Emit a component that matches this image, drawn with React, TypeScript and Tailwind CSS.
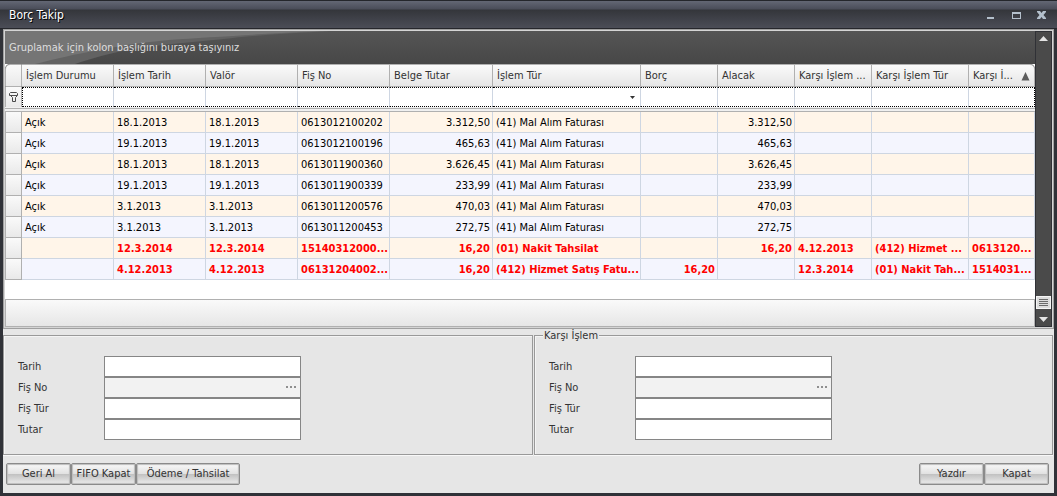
import React, { useState } from "react";
import clsx from "clsx";

type Align = "left" | "right";

interface Column {
  id: string;
  title: string;
  width: string;
  align?: Align;
  filter?: "text" | "select";
  sorted?: boolean;
}

interface Row {
  linked?: boolean;
  cells: string[];
}

const columns: Column[] = [
  { id: "durum", title: "İşlem Durumu", width: "w-[92px]" },
  { id: "tarih", title: "İşlem Tarih", width: "w-[92px]" },
  { id: "valor", title: "Valör", width: "w-[92px]" },
  { id: "fis", title: "Fiş No", width: "w-[92px]" },
  { id: "belge", title: "Belge Tutar", width: "w-[103px]", align: "right" },
  { id: "tur", title: "İşlem Tür", width: "w-[148px]", filter: "select" },
  { id: "borc", title: "Borç", width: "w-[77px]", align: "right" },
  { id: "alacak", title: "Alacak", width: "w-[77px]", align: "right" },
  { id: "karsiTarih", title: "Karşı İşlem ...", width: "w-[77px]" },
  { id: "karsiTur", title: "Karşı İşlem Tür", width: "w-[97px]" },
  { id: "karsiFis", title: "Karşı İ...", width: "w-[66px]", sorted: true }
];

const rows: Row[] = [
  { cells: ["Açık", "18.1.2013", "18.1.2013", "0613012100202", "3.312,50", "(41) Mal Alım Faturası", "", "3.312,50", "", "", ""] },
  { cells: ["Açık", "19.1.2013", "19.1.2013", "0613012100196", "465,63", "(41) Mal Alım Faturası", "", "465,63", "", "", ""] },
  { cells: ["Açık", "18.1.2013", "18.1.2013", "0613011900360", "3.626,45", "(41) Mal Alım Faturası", "", "3.626,45", "", "", ""] },
  { cells: ["Açık", "19.1.2013", "19.1.2013", "0613011900339", "233,99", "(41) Mal Alım Faturası", "", "233,99", "", "", ""] },
  { cells: ["Açık", "3.1.2013", "3.1.2013", "0613011200576", "470,03", "(41) Mal Alım Faturası", "", "470,03", "", "", ""] },
  { cells: ["Açık", "3.1.2013", "3.1.2013", "0613011200453", "272,75", "(41) Mal Alım Faturası", "", "272,75", "", "", ""] },
  { linked: true, cells: ["", "12.3.2014", "12.3.2014", "15140312000...", "16,20", "(01) Nakit Tahsilat", "", "16,20", "4.12.2013", "(412) Hizmet ...", "0613120..."] },
  { linked: true, cells: ["", "4.12.2013", "4.12.2013", "06131204002...", "16,20", "(412) Hizmet Satış Fatu...", "16,20", "", "12.3.2014", "(01) Nakit Tah...", "1514031..."] }
];

// ------------------------------------------------------------------
// Title bar
// ------------------------------------------------------------------
const TitleBar = () => (
  <header className="flex h-[29px] shrink-0 items-center justify-between border-y border-t-[#24262b] border-b-[#26272c] bg-[linear-gradient(#636774_0,#4a4d59_8px,#34363b_9px,#4b4d57_100%)] px-[9px]">
    <h1 className="text-xs text-white [text-shadow:1px_1px_0_#000]">Borç Takip</h1>
    <div className="flex gap-[9px] text-[#b4c0cc]">
      <button type="button" aria-label="Küçült">
        <svg className="block" width="16" height="14" viewBox="0 0 16 14">
          <path d="M5 9h7v2H5z" fill="currentColor" />
        </svg>
      </button>
      <button type="button" aria-label="Ekranı kapla">
        <svg className="block" width="16" height="14" viewBox="0 0 16 14">
          <path d="M5 4h9v7H5zM6 6v4h7V6z" fill="currentColor" fillRule="evenodd" />
        </svg>
      </button>
      <button type="button" aria-label="Pencereyi kapat">
        <svg className="block" width="16" height="14" viewBox="0 0 16 14">
          <path d="M5 3h3l1.500 2L11 3h3v1l-2.500 3L14 10v1h-3L9.500 9 8 11H5v-1l2.500-3L5 4z" fill="currentColor" />
        </svg>
      </button>
    </div>
  </header>
);

// ------------------------------------------------------------------
// Group panel above the grid
// ------------------------------------------------------------------
const GroupPanel = () => (
  <div className="relative flex h-[33px] shrink-0 items-center bg-linear-to-b from-[#555555] to-[#474747] pt-px pl-1 text-[#dedede]">
    <svg className="absolute left-0 top-0" width="326" height="33" viewBox="0 0 326 33">
      <path d="M0 0H326C290 2 255 4 228 7 190 11 158 13 128 18 105 22 88 27 70 33H0z" fill="#626262" />
      <path d="M0 0H326C290 1 255 3 228 5 195 7 170 8 145 11 125 13 110 16 95 19 70 23 50 28 30 33H0z" fill="#757575" />
    </svg>
    <span className="relative">Gruplamak için kolon başlığını buraya taşıyınız</span>
  </div>
);

const FilterIcon = () => (
  <svg className="mx-auto" width="9" height="10" viewBox="0 0 9 10">
    <path d="M1.500 0.500h6l1 1v2l-2 2v4h-3v-4l-2-2h-1v-2zM1 3.500h7" fill="none" stroke="#4a4a4a" />
  </svg>
);

// ------------------------------------------------------------------
// Data grid
// ------------------------------------------------------------------
const indicator = "border-x border-[#b0b0b0] bg-linear-to-b from-[#fafafa] to-[#e9e9e9] p-0";

const DataGrid = () => {
  const [filters, setFilters] = useState<Record<string, string>>({});

  const setFilter = (id: string, value: string) => {
    setFilters((prev) => ({ ...prev, [id]: value }));
  };

  return (
    <table className="w-full table-fixed border-separate border-spacing-0 bg-white">
      <colgroup>
        <col className="w-[17px]" />
        {columns.map((col) => (
          <col key={col.id} className={col.width} />
        ))}
      </colgroup>
      <thead className="text-[#333333]">
        <tr className="h-[23px] bg-[#474747]">
          <td className={clsx(indicator, "rounded-tl-[5px] border-y")} />
          {columns.map((col) => (
            <th
              key={col.id}
              scope="col"
              className={clsx(
                "border-y border-r border-[#b0b0b0] bg-linear-to-b from-[#fafafa] to-[#e6e6e6] px-1 pt-px pb-0 text-left font-normal whitespace-nowrap",
                col.sorted && "rounded-tr-[5px]"
              )}
            >
              <div className="flex items-center justify-between">
                {col.title}
                {col.sorted && (
                  <svg className="shrink-0" width="9" height="9" viewBox="0 0 9 9">
                    <path d="M4.500 0 8.500 8.500H0.500z" fill="#5c5c5c" />
                  </svg>
                )}
              </div>
            </th>
          ))}
        </tr>
        <tr className="h-5">
          <td className={indicator}>
            <FilterIcon />
          </td>
          {columns.map((col, i) => (
            <td
              key={col.id}
              className={clsx(
                "h-5 border-y border-r border-y-black p-0 [border-top-style:dotted] [border-bottom-style:dotted]",
                i === 0 && "border-l border-l-black [border-left-style:dotted]",
                i === columns.length - 1
                  ? "border-r-black [border-right-style:dotted]"
                  : "border-r-[#ced6e2]"
              )}
            >
              {col.filter === "select" ? (
                <div className="relative">
                  <select
                    aria-label={`${col.title} filtresi`}
                    value={filters[col.id] ?? ""}
                    onChange={(e) => setFilter(col.id, e.target.value)}
                    className="block h-[18px] w-full appearance-none px-[3px] outline-none"
                  >
                    <option value=""></option>
                    <option value="01">(01) Nakit Tahsilat</option>
                    <option value="41">(41) Mal Alım Faturası</option>
                    <option value="412">(412) Hizmet Satış Faturası</option>
                  </select>
                  <svg className="pointer-events-none absolute right-[5px] top-2" width="5" height="3" viewBox="0 0 5 3">
                    <path d="M0 0h5L2.500 3z" fill="#333333" />
                  </svg>
                </div>
              ) : (
                <input
                  type="text"
                  aria-label={`${col.title} filtresi`}
                  value={filters[col.id] ?? ""}
                  onChange={(e) => setFilter(col.id, e.target.value)}
                  className="block h-[18px] w-full px-[3px] outline-none"
                />
              )}
            </td>
          ))}
        </tr>
        <tr className="h-[5px]">
          <td colSpan={columns.length + 1} className="bg-[#f0f0f0] p-0">
            <div className="mt-px h-1 border-y border-[#b0b0b0]" />
          </td>
        </tr>
      </thead>
      <tbody>
        {rows.map((row, r) => (
          <tr
            key={r}
            className={clsx(
              "h-[21px]",
              r % 2 === 0 ? "bg-[#fff5e9]" : "bg-[#f4f5fe]",
              row.linked ? "font-bold text-[#ff0000]" : "text-black"
            )}
          >
            <td className={clsx(indicator, "border-b")} />
            {row.cells.map((cell, c) => (
              <td
                key={columns[c].id}
                className={clsx(
                  "overflow-hidden border-r border-b border-[#ced6e2] pt-0.5 pr-0.5 pb-0 pl-[3px] whitespace-nowrap",
                  columns[c].align === "right" && "text-right"
                )}
              >
                {cell}
              </td>
            ))}
          </tr>
        ))}
      </tbody>
    </table>
  );
};

const ScrollBar = () => (
  <div className="flex w-[17px] shrink-0 flex-col items-center border border-[#303136] bg-[#4a4a4a]">
    <button type="button" aria-label="Yukarı kaydır" className="px-[3px] py-1">
      <svg className="block" width="9" height="5" viewBox="0 0 9 5">
        <path d="M4.500 0 9 5H0z" fill="#e4e4e4" />
      </svg>
    </button>
    <div className="flex-1" />
    <div className="flex h-[13px] w-full flex-col justify-center gap-px border border-[#f5f5f5] bg-[#dcdcdc] px-0.5">
      <div className="h-px bg-[#6a6a6a]" />
      <div className="h-px bg-[#6a6a6a]" />
      <div className="h-px bg-[#6a6a6a]" />
      <div className="h-px bg-[#6a6a6a]" />
    </div>
    <button type="button" aria-label="Aşağı kaydır" className="px-[3px] pt-2 pb-1">
      <svg className="block" width="9" height="5" viewBox="0 0 9 5">
        <path d="M0 0h9L4.500 5z" fill="#e4e4e4" />
      </svg>
    </button>
  </div>
);

// ------------------------------------------------------------------
// Detail form
// ------------------------------------------------------------------
const fields = ["Tarih", "Fiş No", "Fiş Tür", "Tutar"];

const DetailForm: React.FC<{ prefix: string; legend?: string }> = ({ prefix, legend }) => (
  <fieldset
    aria-label={legend ?? "İşlem"}
    className={clsx(
      "min-w-0 border border-[#999999] pl-3.5 pb-[14px] shadow-[inset_1px_1px_0_#f4f4f4,0_1px_0_#f8f8f8]",
      legend ? "pt-[14px]" : "mt-1.5 pt-5"
    )}
  >
    {legend && <legend className="-ml-1.5 h-[13px] bg-[#e6e6e6] px-px leading-[14px]">{legend}</legend>}
    {fields.map((field) => {
      const id = `${prefix}-${field}`;
      const lookup = field === "Fiş No";
      return (
        <div key={field} className="flex h-[21px] items-center">
          <label htmlFor={id} className="w-[86px]">
            {field}
          </label>
          <div className="relative">
            <input
              id={id}
              type="text"
              readOnly={lookup}
              className={clsx(
                "block h-[21px] w-[197px] border border-[#868686] px-1 outline-none",
                lookup ? "bg-[#f2f2f2]" : "bg-white"
              )}
            />
            {lookup && (
              <button type="button" aria-label="Fiş seç" className="absolute right-1 top-[9px]">
                <svg className="block" width="11" height="2" viewBox="0 0 11 2">
                  <path d="M0 0h2v2H0zM4 0h2v2H4zM8 0h2v2H8z" fill="#8f8f8f" />
                </svg>
              </button>
            )}
          </div>
        </div>
      );
    })}
  </fieldset>
);

const ActionButton: React.FC<{ wide?: boolean; children: React.ReactNode }> = ({ wide, children }) => (
  <button
    type="button"
    className={clsx(
      "h-[22px] rounded-[2px] border border-[#8a8a8a] bg-[linear-gradient(#f8f8f8_0,#e2e2e2_48%,#c0c0c0_50%,#ececec_100%)] text-center whitespace-nowrap shadow-[inset_0_0_1px_1px_#bcbcbc]",
      wide ? "w-[104px]" : "w-[65px]"
    )}
  >
    {children}
  </button>
);

const App: React.FC = () => {
  return (
    <div className="flex min-h-screen flex-col bg-[#303238] font-['DejaVu_Sans_Condensed','Noto_Sans',sans-serif] text-[11px] leading-[14px] text-[#333333]">
      <TitleBar />
      <main className="mx-[3px] mb-[3px] flex flex-1 flex-col bg-[#e6e6e6]">
        <section className="flex flex-1 border-2 border-[#d4d4d4] outline -outline-offset-1 outline-[#a0a0a0]">
          <div className="flex min-w-0 flex-1 flex-col bg-white">
            <GroupPanel />
            <DataGrid />
            <div className="min-h-[19px] flex-1" />
            <div className="h-7 shrink-0 border border-[#b0b0b0] bg-linear-to-b from-[#fafafa] to-[#e6e6e6]" />
          </div>
          <ScrollBar />
        </section>

        <div className="grid grid-cols-[530fr_519fr] gap-px pr-px">
          <DetailForm prefix="islem" />
          <DetailForm prefix="karsi" legend="Karşı İşlem" />
        </div>

        <footer className="flex justify-between pt-2 pr-[5px] pb-2 pl-[3px]">
          <div className="flex">
            <ActionButton>Geri Al</ActionButton>
            <ActionButton>FIFO Kapat</ActionButton>
            <ActionButton wide>Ödeme / Tahsilat</ActionButton>
          </div>
          <div className="flex">
            <ActionButton>Yazdır</ActionButton>
            <ActionButton>Kapat</ActionButton>
          </div>
        </footer>
      </main>
    </div>
  );
};

export default App;
